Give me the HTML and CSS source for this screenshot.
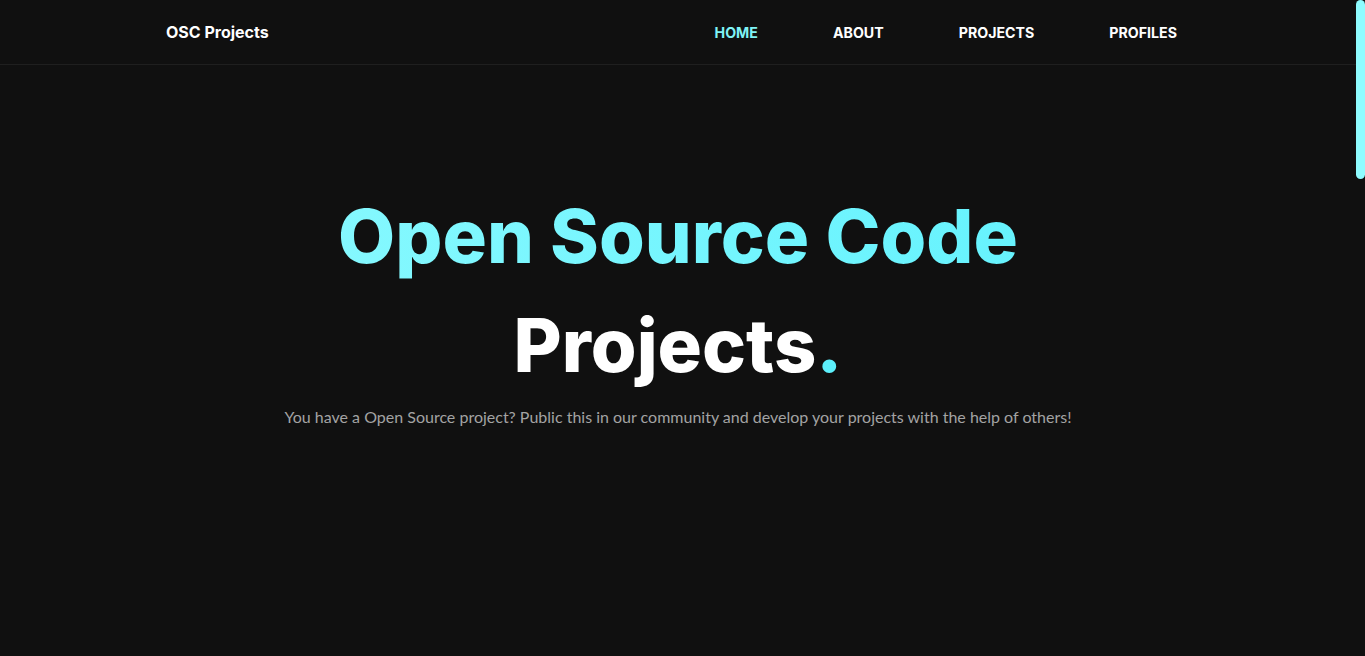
FILE: index.html
```html
<!DOCTYPE html>
<html lang="en">
<head>
<meta charset="utf-8">
<title>OSC Projects</title>
<link rel="stylesheet" href="styles.css">
</head>
<body>
<div class="page">
  <header class="header">
    <div class="container header-inner">
      <a class="logo" href="#">OSC Projects</a>
      <nav class="nav">
        <a class="nav-link active" href="#">HOME</a>
        <a class="nav-link" href="#">ABOUT</a>
        <a class="nav-link" href="#">PROJECTS</a>
        <a class="nav-link" href="#">PROFILES</a>
      </nav>
    </div>
  </header>
  <main class="main">
    <section class="hero">
      <h1 class="hero-title">
        <span class="gradient">Open Source Code</span>
        <span class="white">Projects<span class="dot">.</span></span>
      </h1>
      <p class="hero-text">You have a Open Source project? Public this in our community and develop your projects with the help of others!</p>
    </section>
  </main>
</div>
<div class="scrollbar"><div class="scroll-thumb"></div></div>
</body>
</html>
```
FILE: styles.css
```css
* { box-sizing: border-box; }
html, body { height: 100%; }
body {
  margin: 0;
  background: #101010;
  color: #fff;
  font-family: "Inter", "Liberation Sans", sans-serif;
  overflow: hidden;
}
.page { margin-right: 9px; }
.container { width: 1024px; margin: 0 auto; }
.header { border-bottom: 1px solid #1f1f1f; }
.header-inner {
  height: 64px;
  display: flex;
  align-items: center;
  justify-content: space-between;
  padding-right: 13px;
}
.logo {
  color: #fff;
  text-decoration: none;
  font-weight: 700;
  font-size: 16px;
}
.nav { display: flex; gap: 75px; }
.nav-link {
  color: #fff;
  text-decoration: none;
  font-weight: 700;
  font-size: 14.2px;
}
.nav-link.active { color: #7ff3f5; }
.hero {
  padding-top: 117px;
  text-align: center;
}
.hero-title {
  margin: 0;
  font-size: 74px;
  font-weight: 800;
  line-height: 109px;
}
.hero-title span { display: block; }
.gradient {
  background: linear-gradient(90deg, #93fbff, #58f0fd);
  -webkit-background-clip: text;
  background-clip: text;
  color: transparent;
}
.white { color: #fff; }
.hero-title .dot { display: inline; color: #5cf0fc; }
.hero-text {
  margin: 7px 0 0;
  color: #a3a3a3;
  font-family: "Lato", sans-serif;
  font-size: 16px;
}
.scrollbar {
  position: fixed;
  top: 0;
  right: 0;
  bottom: 0;
  width: 9px;
  background: #101010;
}
.scroll-thumb {
  height: 179px;
  background: #8ffcff;
  border-radius: 5px;
}
```
